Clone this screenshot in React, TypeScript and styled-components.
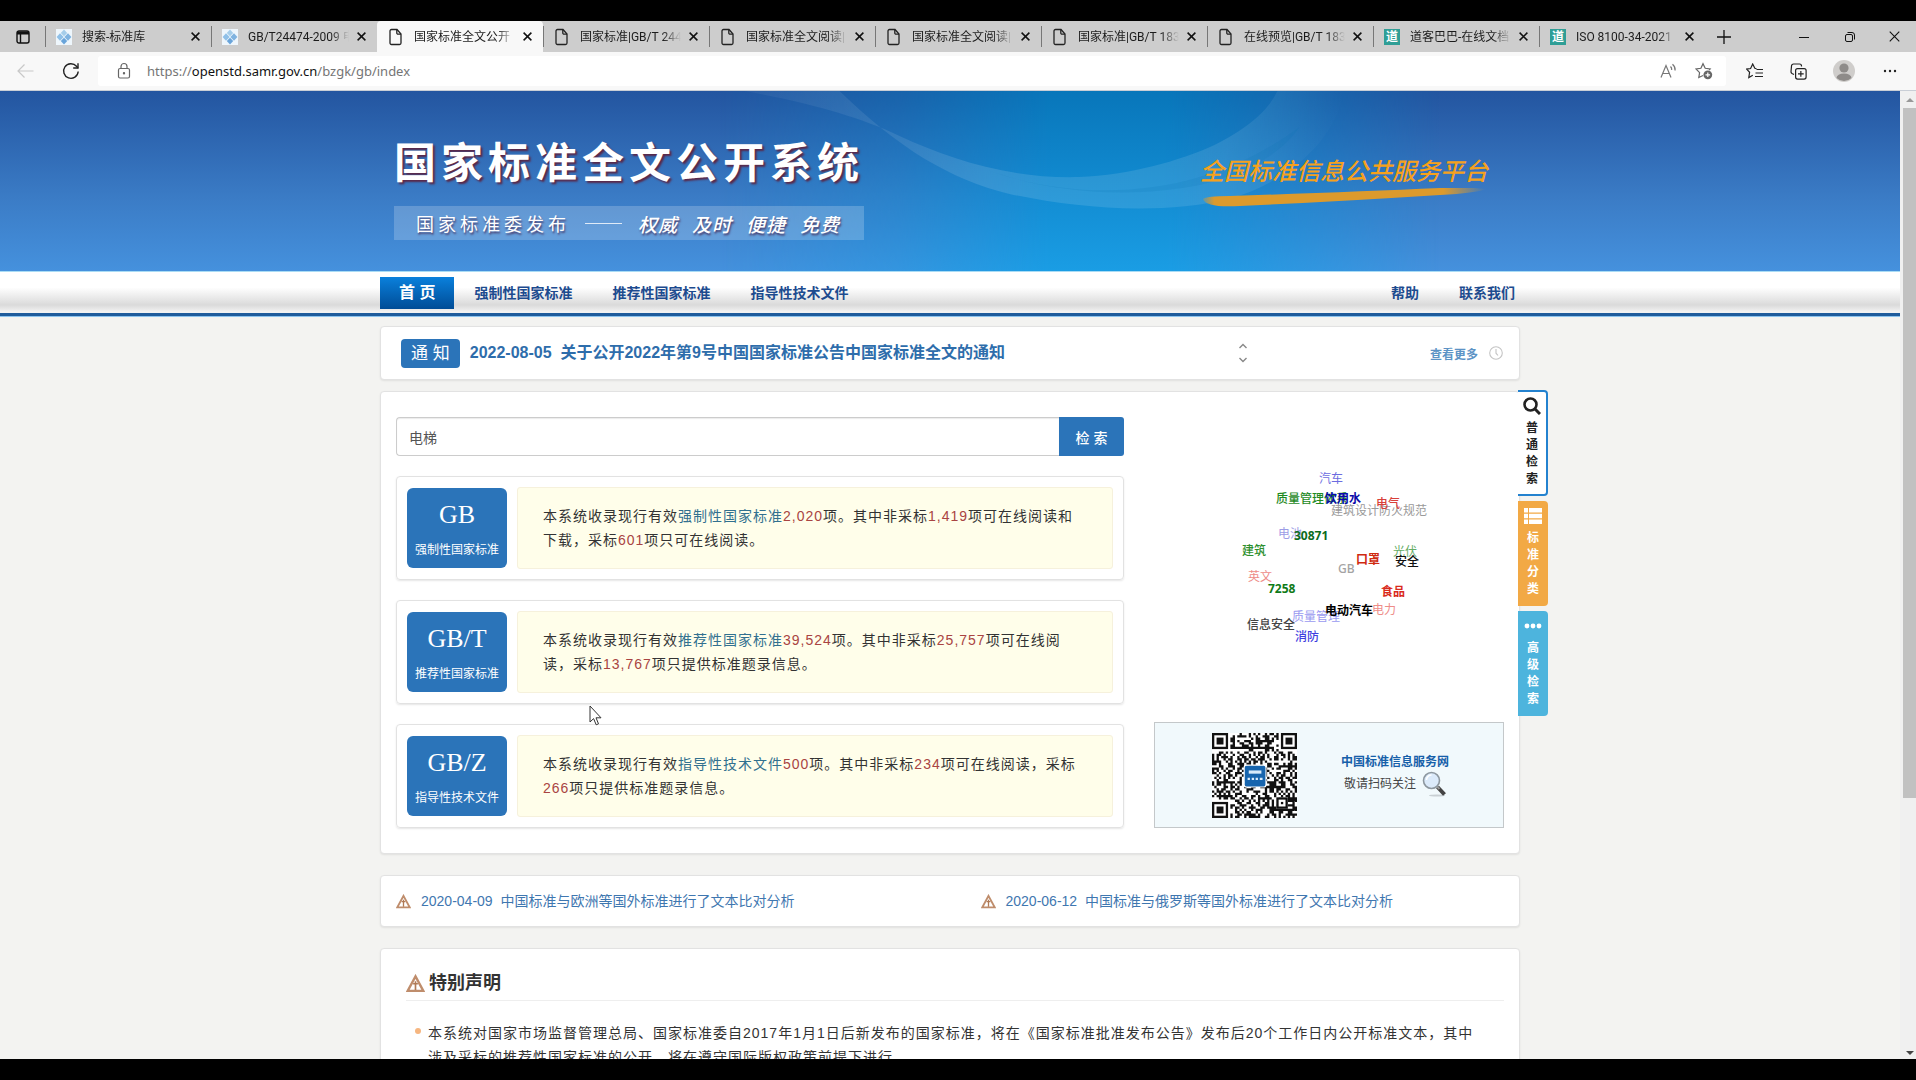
import React from "react";
import styled, { createGlobalStyle } from "styled-components";

const sans = `"Liberation Sans", "Noto Sans CJK SC", sans-serif`;
const ui = `"Noto Sans", "Noto Sans CJK SC", sans-serif`;
const tabFont = `Roboto, "Noto Sans CJK SC", sans-serif`;

const Global = createGlobalStyle`
  * { box-sizing: border-box; }
  html, body { margin: 0; background: #000; overflow: hidden; }
  body { font-family: ${sans}; font-size: 14px; color: #333; }
  button, input { font-family: inherit; margin: 0; }
  a { text-decoration: none; color: inherit; }
  svg { display: block; flex: none; }
`;

/* ---------- browser frame ---------- */

const Screen = styled.div`
  display: flex;
  flex-direction: column;
  height: 100vh;
  padding: 21px 0;
  background: #000;
`;

const TabStrip = styled.div`
  display: flex;
  align-items: stretch;
  height: 31px;
  background: #cdcdcd;
  flex: none;
  font-family: ${tabFont};
  font-size: 12px;
  color: #1c1c1c;
`;

const StripButton = styled.button<{ $w: number }>`
  display: flex;
  align-items: center;
  justify-content: center;
  width: ${(p) => p.$w}px;
  padding: 0;
  border: 0;
  background: transparent;
`;

const Tab = styled.div<{ $active?: boolean }>`
  display: flex;
  align-items: center;
  flex: 0 1 166px;
  min-width: 0;
  padding: 0 7px 0 10px;
  background: ${(p) => (p.$active ? "#f8f8f8" : "transparent")};
  border-radius: ${(p) => (p.$active ? "4px 4px 0 0" : "0")};
  border-left: 1px solid transparent;
  border-image: ${(p) =>
    p.$active ? "none" : "linear-gradient(transparent 18%, #777 18%, #777 82%, transparent 82%) 1"};
`;

const TabTitle = styled.span`
  flex: 1;
  min-width: 0;
  margin-left: 10px;
  line-height: 18px;
  white-space: nowrap;
  overflow: hidden;
  mask-image: linear-gradient(90deg, #000 82%, transparent);
`;

const TabClose = styled.button`
  display: flex;
  align-items: center;
  justify-content: center;
  width: 18px;
  height: 18px;
  margin-left: 3px;
  padding: 0;
  border: 0;
  background: transparent;
`;

const WindowControls = styled.div`
  display: flex;
  margin-left: auto;
`;

const Toolbar = styled.div`
  display: flex;
  align-items: center;
  height: 39px;
  padding: 0 3px;
  background: #f8f8f8;
  border-bottom: 1px solid #c9ced6;
  flex: none;
`;

const AddressBar = styled.div`
  display: flex;
  align-items: center;
  flex: 1;
  height: 30px;
  margin: 0 6px 0 5px;
  padding: 0 4px 0 17px;
  background: #fff;
  border-radius: 3px;
  font-family: ${ui};
  font-size: 13px;
`;

const Url = styled.a`
  flex: 1;
  margin-left: 14px;
  color: #757575;
  line-height: 20px;
  b { font-weight: 400; color: #111; }
`;

const TeaTile = styled.span`
  display: flex;
  align-items: center;
  justify-content: center;
  width: 16px;
  height: 16px;
  background: #2f9e96;
  color: #fff;
  font-size: 12px;
  line-height: 16px;
  font-weight: 700;
`;

/* ---------- page ---------- */

const Viewport = styled.div`
  display: flex;
  flex: 1;
  min-height: 0;
`;

const Page = styled.div`
  position: relative;
  flex: 1;
  min-width: 0;
  overflow: hidden;
  background: #f3f3f1;
`;

const ScrollTrack = styled.div`
  display: flex;
  flex-direction: column;
  align-items: center;
  width: 16px;
  padding: 6px 0 3px 3px;
  background: #f0f0f0;
`;

const ScrollThumb = styled.div`
  flex: 0 0 72%;
  width: 100%;
  margin: 5px 0 auto;
  background: #c1c1c1;
`;

const Container = styled.div`
  width: 100%;
  max-width: 1140px;
  margin: 0 auto;
`;

const Banner = styled.header`
  position: relative;
  height: 180px;
  background: linear-gradient(#2355a0, #3b7cc6 60%, #4591dd);
  overflow: hidden;
`;

const BannerArt = styled.svg`
  position: absolute;
  left: 50%;
  top: 0;
  width: 1901px;
  height: 180px;
  transform: translateX(-50%);
`;

const BannerRow = styled(Container)`
  position: relative;
  display: flex;
  justify-content: space-between;
  padding: 45px 32px 0 14px;
`;

const BannerTitle = styled.h1`
  margin: 0;
  font-size: 42px;
  line-height: 56px;
  letter-spacing: 5px;
  font-weight: 700;
  color: #fff;
  text-shadow: 2px 2px 2px #5a2848;
`;

const Slogan = styled.p`
  display: flex;
  align-items: center;
  height: 34px;
  margin: 14px 0 0;
  padding: 0 22px;
  background: rgba(255, 255, 255, 0.2);
  color: #fff;
  text-shadow: 1px 2px 2px #4a4070;
  font-size: 18px;
  letter-spacing: 4px;
`;

const SloganDash = styled.i`
  width: 37px;
  height: 1px;
  margin: 0 16px 0 15px;
  background: #dfeaf7;
`;

const SloganWords = styled.em`
  display: flex;
  gap: 14px;
  font-size: 19px;
  letter-spacing: 1px;
  font-weight: 500;
`;

const Platform = styled.div`
  padding-top: 20px;
  color: #f6a11c;
  font-size: 24px;
  line-height: 32px;
  font-style: italic;
  font-weight: 500;
`;

const NavBar = styled.nav`
  height: 46px;
  border-top: 1px solid #a9dcf5;
  border-bottom: 1px solid #8cc3ee;
  box-shadow: inset 0 -3px 0 #1f5c9c;
  background: linear-gradient(#fff 35%, #dadada 75%, #f2f2f2 90%);
`;

const NavList = styled(Container)`
  display: flex;
  align-items: center;
  padding: 5px 0 0;
`;

const NavLink = styled.a<{ $current?: boolean }>`
  padding: 0 ${(p) => (p.$current ? 19 : 20)}px;
  line-height: 32px;
  font-size: ${(p) => (p.$current ? 16 : 14)}px;
  font-weight: 700;
  color: ${(p) => (p.$current ? "#fff" : "#1d4b8f")};
  background: ${(p) => (p.$current ? "linear-gradient(#0a80dc, #004c96)" : "none")};
`;

const NavEnd = styled.div`
  display: flex;
  margin: 0 -15px 0 auto;
`;

const Card = styled.section`
  background: #fff;
  border: 1px solid #e2e2e2;
  border-radius: 4px;
  box-shadow: 0 1px 2px rgba(0, 0, 0, 0.08);
`;

const Body = styled(Container).attrs({ as: "main" })`
  position: relative;
  padding-top: 9px;
`;

const Notice = styled(Card)`
  display: flex;
  align-items: center;
  height: 54px;
  padding: 0 16px 0 20px;
`;

const NoticeBadge = styled.span`
  padding: 0 10px;
  margin-right: 10px;
  border-radius: 4px;
  background: #2b74b9;
  color: #fff;
  font-size: 17px;
  line-height: 29px;
`;

const NoticeLink = styled.a`
  color: #2e6dab;
  font-size: 16px;
  font-weight: 700;
  line-height: 24px;
  white-space: pre;
`;

const Stepper = styled.div`
  display: flex;
  flex-direction: column;
  margin: 0 179px 0 auto;
  button {
    padding: 4px;
    border: 0;
    background: transparent;
  }
`;

const MoreLink = styled.a`
  display: flex;
  align-items: center;
  gap: 11px;
  color: #5c93c5;
  font-size: 12px;
  font-weight: 700;
`;

const MainCard = styled(Card)`
  position: relative;
  display: flex;
  gap: 30px;
  margin-top: 11px;
  padding: 25px 15px;
`;

const Left = styled.div`
  display: flex;
  flex-direction: column;
  gap: 20px;
  flex: 1;
  min-width: 0;
`;

const SearchForm = styled.form`
  display: flex;
  height: 39px;
`;

const SearchInput = styled.input`
  flex: 1;
  min-width: 0;
  padding: 0 12px;
  border: 1px solid #ccc;
  border-right: 0;
  border-radius: 4px 0 0 4px;
  font-size: 14px;
  color: #555;
  box-shadow: inset 0 1px 1px rgba(0, 0, 0, 0.08);
`;

const SearchButton = styled.button`
  width: 65px;
  border: 0;
  border-radius: 0 3px 3px 0;
  background: #2b74b9;
  color: #fff;
  font-size: 14px;
  font-weight: 500;
`;

const Kind = styled.article`
  display: flex;
  align-items: center;
  gap: 10px;
  padding: 10px;
  border: 1px solid #e2e2e2;
  border-radius: 4px;
  box-shadow: 0 1px 2px rgba(0, 0, 0, 0.1);
`;

const KindBadge = styled.a`
  display: flex;
  flex-direction: column;
  align-items: center;
  width: 100px;
  height: 80px;
  padding-top: 10px;
  border-radius: 6px;
  background: #2b74b9;
  color: #fff;
  font-size: 12px;
  line-height: 18px;
  strong {
    margin-bottom: 9px;
    font-family: "Liberation Serif", serif;
    font-weight: 400;
    font-size: 26px;
    line-height: 34px;
  }
`;

const KindText = styled.p`
  flex: 1;
  margin: 0;
  padding: 16px 25px;
  border: 1px solid #f6f1dc;
  border-radius: 3px;
  background: #fffeea;
  line-height: 24px;
  letter-spacing: 1px;
  color: #333;
  a { color: #31708f; }
  span { color: #a94442; }
`;

const Right = styled.aside`
  display: flex;
  flex-direction: column;
  justify-content: space-between;
  width: 350px;
`;

const Cloud = styled.div`
  position: relative;
  height: 280px;
  font-family: ${ui};
  font-size: 12px;
  line-height: 18px;
`;

const Tag = styled.a<{ $x: number; $y: number; $c: string; $w?: number }>`
  position: absolute;
  left: ${(p) => p.$x}px;
  top: ${(p) => p.$y}px;
  color: ${(p) => p.$c};
  font-weight: ${(p) => p.$w ?? 400};
  white-space: nowrap;
`;

const QrBox = styled.div`
  display: flex;
  align-items: center;
  gap: 44px;
  height: 106px;
  padding: 0 54px 0 57px;
  border: 1px solid #c4c8ca;
  background: #f1f9fc;
`;

const QrText = styled.div`
  font-size: 12px;
  line-height: 18px;
  color: #444;
  b { display: block; color: #1660a9; }
  span {
    display: flex;
    align-items: center;
    gap: 5px;
    padding-left: 3px;
  }
`;

const SideTabs = styled.div`
  position: absolute;
  left: 100%;
  top: -2px;
  display: flex;
  flex-direction: column;
  gap: 5px;
  margin-left: -1px;
`;

const SideTab = styled.button<{ $bg: string; $outlined?: boolean }>`
  display: flex;
  flex-direction: column;
  align-items: center;
  gap: 5px;
  width: 30px;
  height: ${(p) => (p.$outlined ? 106 : 105)}px;
  padding: ${(p) => (p.$outlined ? 5 : 6)}px 0 0;
  border: ${(p) => (p.$outlined ? "2px solid #2382cf" : "0")};
  border-left: 0;
  border-radius: 0 4px 4px 0;
  background: ${(p) => p.$bg};
  color: ${(p) => (p.$outlined ? "#222" : "#fff")};
  font-size: 12px;
  line-height: 17px;
  font-weight: 700;
  span { width: 12px; }
`;

const Compare = styled(Card)`
  display: grid;
  grid-template-columns: 1fr 1fr;
  margin-top: 21px;
  padding: 0 0 0 15px;
  a {
    display: flex;
    align-items: center;
    gap: 10px;
    color: #3f77b0;
    line-height: 50px;
    white-space: pre;
  }
  a + a { padding-left: 23px; }
`;

const Statement = styled(Card)`
  margin-top: 21px;
  padding: 21px 15px 20px 25px;
`;

const StatementTitle = styled.h2`
  display: flex;
  align-items: center;
  gap: 4px;
  margin: 0 0 20px;
  padding-bottom: 3px;
  border-bottom: 1px solid #eee;
  font-size: 18px;
  line-height: 27px;
  color: #333;
`;

const StatementList = styled.ul`
  margin: 0;
  padding: 0 28px 0 0;
  list-style: none;
  li {
    display: flex;
    gap: 7px;
    padding-left: 9px;
    line-height: 24px;
    letter-spacing: 1px;
  }
  li::before {
    content: "";
    flex: none;
    width: 6px;
    height: 6px;
    margin-top: 7px;
    border-radius: 50%;
    background: #f6b680;
  }
`;

const Pointer = styled.svg`
  position: absolute;
  left: 589px;
  top: 614px;
`;

/* ---------- drawings ---------- */

const Diamonds = () => (
  <svg width="16" height="16" viewBox="0 0 16 16">
    <rect width="16" height="16" fill="#eef6fc" />
    <path d="M8 0.500l3.200 3.400L8 7.300 4.800 3.900z" fill="#a5cdea" />
    <path d="M4 4.300l3.600 3.700-3.600 3.700L.6 8z" fill="#8fc0e8" />
    <path d="M12 4.300L15.400 8 12 11.700 8.400 8z" fill="#7fb3e0" />
    <path d="M8 8.700l3.200 3.400L8 15.500l-3.200-3.400z" fill="#69a4da" />
  </svg>
);

const Doc = () => (
  <svg width="16" height="18" viewBox="0 0 16 18" fill="none" stroke="#222" strokeWidth="1.3">
    <path d="M3.500 1.500h5.500l4 4.500v9a1.500 1.500 0 0 1-1.500 1.500h-8A1.500 1.500 0 0 1 2 15V3a1.500 1.500 0 0 1 1.500-1.500z" />
    <path d="M8.800 1.700V5a1.200 1.200 0 0 0 1.200 1.200h3" />
  </svg>
);

const Tea = () => <TeaTile aria-hidden="true">道</TeaTile>;

const Cross = ({ s = 9, w = 1.5 }: { s?: number; w?: number }) => (
  <svg width={s} height={s} viewBox="0 0 9 9" stroke="#111" strokeWidth={w}>
    <path d="M.6.6l7.800 7.800M8.400.6L.6 8.400" />
  </svg>
);

const Warn = ({ s }: { s: number }) => (
  <svg width={s} height={s} viewBox="0 0 16 16">
    <path d="M8 2L14.600 14.200H1.400z" fill="none" stroke="#bf8d6c" strokeWidth="2" />
    <path d="M8 6v7.500M6 8.200h4" stroke="#b07a56" strokeWidth="1.400" />
  </svg>
);

const QR_SIZE = 37;
const qrPath = (() => {
  let seed = 20220805;
  const next = () => {
    seed = (seed * 1103515245 + 12345) & 0x7fffffff;
    return (seed >> 12) & 1;
  };
  const inFinder = (x: number, y: number) =>
    (x < 8 && y < 8) || (x > QR_SIZE - 9 && y < 8) || (x < 8 && y > QR_SIZE - 9);
  let d = "";
  for (let y = 0; y < QR_SIZE; y++)
    for (let x = 0; x < QR_SIZE; x++) if (next() && !inFinder(x, y)) d += `M${x} ${y}h1v1h-1z`;
  return d;
})();

const Finder = ({ x, y }: { x: number; y: number }) => (
  <g>
    <rect x={x + 0.5} y={y + 0.5} width="6" height="6" fill="#fff" stroke="#111" />
    <rect x={x + 2} y={y + 2} width="3" height="3" fill="#111" />
  </g>
);

const Qr = () => (
  <svg width="85" height="85" viewBox={`0 0 ${QR_SIZE} ${QR_SIZE}`} role="img" aria-label="QR">
    <rect width={QR_SIZE} height={QR_SIZE} fill="#fff" />
    <path d={qrPath} fill="#111" />
    <Finder x={0} y={0} />
    <Finder x={30} y={0} />
    <Finder x={0} y={30} />
    <rect x="28" y="28" width="5" height="5" fill="#fff" />
    <rect x="28.500" y="28.500" width="4" height="4" fill="none" stroke="#111" />
    <rect x="30" y="30" width="1" height="1" fill="#111" />
    <rect x="14" y="14" width="9.500" height="9.500" rx="1" fill="#1765ae" stroke="#fff" strokeWidth=".5" />
    <path d="M16 17h5.500" stroke="#d8ebfb" strokeWidth="1.400" />
    <path d="M15.500 20h1M17.300 20h1M19 20h1M20.800 20h1.200" stroke="#d8ebfb" strokeWidth="1" />
  </svg>
);

const Glass = () => (
  <svg width="26" height="26" viewBox="0 0 26 26">
    <ellipse cx="16" cy="24.500" rx="8" ry="1" fill="#c9d0d4" />
    <path d="M16.500 16l7 7.500" stroke="#444" strokeWidth="4" />
    <path d="M15.500 15l3 3" stroke="#999" strokeWidth="2" />
    <circle cx="10.500" cy="9.500" r="8" fill="#dbeafa" stroke="#8d979f" strokeWidth="1.600" />
    <path d="M5.500 9a5 5 0 0 1 5-5" stroke="#fff" strokeWidth="1.500" fill="none" />
  </svg>
);

/* ---------- data ---------- */

const tabs: [React.FC, string, boolean?][] = [
  [Diamonds, "搜索-标准库"],
  [Diamonds, "GB/T24474-2009 电"],
  [Doc, "国家标准全文公开", true],
  [Doc, "国家标准|GB/T 244"],
  [Doc, "国家标准全文阅读|"],
  [Doc, "国家标准全文阅读|"],
  [Doc, "国家标准|GB/T 183"],
  [Doc, "在线预览|GB/T 183"],
  [Tea, "道客巴巴-在线文档"],
  [Tea, "ISO 8100-34-2021"],
];

const tags: [string, number, number, string, number?][] = [
  ["汽车", 165, 53, "#6c6ce0"],
  ["质量管理体系", 122, 73, "#1f8a1f", 500],
  ["建筑设计防火规范", 177, 85, "#9a9a9a"],
  ["饮用水", 171, 73, "#0a0aa8", 700],
  ["电气", 222, 78, "#d8403a", 500],
  ["电池", 124, 108, "#9c9ce6"],
  ["30871", 140, 110, "#0b6b1c", 700],
  ["建筑", 88, 125, "#2e8f2e", 500],
  ["口罩", 202, 134, "#cf2a10", 700],
  ["GB", 184, 143, "#a3a3a3", 500],
  ["光伏", 239, 126, "#66ad66"],
  ["安全", 241, 136, "#111", 500],
  ["英文", 94, 151, "#ee8c88"],
  ["7258", 114, 163, "#0f7a18", 700],
  ["食品", 227, 166, "#d92a1c", 700],
  ["质量管理", 138, 191, "#9a9af0"],
  ["电动汽车", 171, 185, "#000", 700],
  ["电力", 218, 184, "#ee8c88"],
  ["信息安全", 93, 199, "#444", 500],
  ["消防", 141, 211, "#3f3fe0", 500],
];

export default function App() {
  return (
    <>
      <Global />
      <Screen>
        <TabStrip>
          <StripButton $w={45} aria-label="Tab actions">
            <svg width="14" height="14" viewBox="0 0 14 14" fill="none" stroke="#111" strokeWidth="1.400">
              <rect x="1" y="1" width="12" height="12" rx="2" />
              <path d="M1 3h12" strokeWidth="3" />
              <path d="M4.500 4v9" />
            </svg>
          </StripButton>
          {tabs.map(([Icon, title, active], i) => (
            <Tab key={i} $active={active}>
              <Icon />
              <TabTitle>{title}</TabTitle>
              <TabClose aria-label="Close tab">
                <Cross />
              </TabClose>
            </Tab>
          ))}
          <StripButton $w={38} aria-label="New tab">
            <svg width="14" height="14" stroke="#111" strokeWidth="1.300">
              <path d="M7 0v14M0 7h14" />
            </svg>
          </StripButton>
          <WindowControls>
            <StripButton $w={46} aria-label="Minimize">
              <svg width="10" height="10" stroke="#111">
                <path d="M0 5.500h10" />
              </svg>
            </StripButton>
            <StripButton $w={46} aria-label="Restore">
              <svg width="10" height="10" fill="none" stroke="#111">
                <rect x=".5" y="2.500" width="7" height="7" rx="1.500" />
                <path d="M2.500.5H7A2.500 2.500 0 0 1 9.500 3v4.500" />
              </svg>
            </StripButton>
            <StripButton $w={43} aria-label="Close">
              <Cross s={11} w={0.9} />
            </StripButton>
          </WindowControls>
        </TabStrip>

        <Toolbar>
          <StripButton $w={45} aria-label="Back" disabled>
            <svg width="17" height="14" viewBox="0 0 17 14" fill="none" stroke="#c8c8c8" strokeWidth="1.200">
              <path d="M16.500 7H1M7.500.5L1 7l6.500 6.500" />
            </svg>
          </StripButton>
          <StripButton $w={45} aria-label="Reload">
            <svg width="18" height="18" viewBox="0 0 18 18" fill="none" stroke="#222" strokeWidth="1.400">
              <path d="M16.200 9.500A7.300 7.300 0 1 1 14.500 4.300L16 6" />
              <path d="M16 1.200V6h-4.800" />
            </svg>
          </StripButton>
          <AddressBar>
            <svg width="18" height="18" viewBox="0 0 18 18" fill="none" stroke="#666" strokeWidth="1.200">
              <rect x="3.500" y="6.500" width="11" height="9.500" rx="1.500" />
              <path d="M6 6.500V4.500a3 3 0 0 1 6 0v2" />
              <circle cx="9" cy="11.200" r=".6" fill="#666" />
            </svg>
            <Url href="#">
              https://<b>openstd.samr.gov.cn</b>/bzgk/gb/index
            </Url>
            <StripButton $w={36} aria-label="Read aloud">
              <svg width="17" height="16" viewBox="0 0 17 16" fill="none" stroke="#777" strokeWidth="1.200">
                <path d="M1 14.500L6 2.500l5 12M2.800 10.500h6.400" />
                <path d="M10.500 3.500q1.500 1.500 1.200 3.500M12.500 1.200q3 2.500 2.600 6.300" />
              </svg>
            </StripButton>
            <StripButton $w={36} aria-label="Add to favorites">
              <svg width="18" height="18" viewBox="0 0 18 18" fill="none" stroke="#666" strokeWidth="1.200">
                <path d="M8 15l-4.200 2 .8-4.900L1 8.500l4.900-.7L8 3.200l2.200 4.600 4.900.7-1 1" transform="translate(0 -1.500)" />
                <circle cx="12.800" cy="12.800" r="4.400" fill="#666" stroke="none" />
                <path d="M12.800 10.500v4.600M10.500 12.800h4.600" stroke="#fff" />
              </svg>
            </StripButton>
          </AddressBar>
          <StripButton $w={44} aria-label="Favorites">
            <svg width="17" height="17" viewBox="0 0 17 17" fill="none" stroke="#222" strokeWidth="1.200">
              <path d="M10.500 5.600L8.800 5.300 6.700 1 4.600 5.500l-4 .6 3 3.200-.8 5.200 4-2.300" />
              <path d="M10.500 6.500H17M9.500 10H17M9 13.500h8" />
            </svg>
          </StripButton>
          <StripButton $w={45} aria-label="Collections">
            <svg width="17" height="17" viewBox="0 0 17 17" fill="none" stroke="#222" strokeWidth="1.200">
              <rect x="5.600" y="5.600" width="10.500" height="10.500" rx="2" />
              <path d="M10.850 8v5.700M8 10.850h5.700" />
              <path d="M4 11.500L2 10.500a2 2 0 0 1-1-2L1.500 3A2 2 0 0 1 3.500 1h6a2 2 0 0 1 2 2v.5" />
            </svg>
          </StripButton>
          <StripButton $w={46} aria-label="Profile">
            <svg width="22" height="22" viewBox="0 0 22 22">
              <circle cx="11" cy="11" r="11" fill="#cfcdcb" />
              <circle cx="11" cy="8" r="4.600" fill="#8e8b89" />
              <path d="M3.500 18a7.500 4.500 0 0 1 15 0 11 11 0 0 1-15 0z" fill="#8e8b89" />
            </svg>
          </StripButton>
          <StripButton $w={46} aria-label="Menu">
            <svg width="14" height="4" fill="#222">
              <circle cx="2" cy="2" r="1.200" />
              <circle cx="7" cy="2" r="1.200" />
              <circle cx="12" cy="2" r="1.200" />
            </svg>
          </StripButton>
        </Toolbar>

        <Viewport>
          <Page>
            <Banner>
              <BannerArt viewBox="0 0 1901 180" aria-hidden="true">
                <defs>
                  <linearGradient id="glow" x1="0" x2="0" y1="0" y2="1">
                    <stop offset="0" stopColor="#0876ba" />
                    <stop offset="1" stopColor="#1a9de4" />
                  </linearGradient>
                  <linearGradient id="fade" x1="0" x2="1" y1="0" y2="0">
                    <stop offset="0" stopColor="#fff" stopOpacity="0" />
                    <stop offset=".25" stopColor="#fff" stopOpacity=".4" />
                    <stop offset=".46" stopColor="#fff" />
                    <stop offset=".62" stopColor="#fff" />
                    <stop offset="1" stopColor="#fff" stopOpacity="0" />
                  </linearGradient>
                  <mask id="glowMask">
                    <rect x="720" width="720" height="180" fill="url(#fade)" />
                  </mask>
                  <linearGradient id="swoosh" x1="0" x2="1" y1="0" y2="0">
                    <stop offset="0" stopColor="#fff" stopOpacity=".04" />
                    <stop offset=".4" stopColor="#fff" stopOpacity=".12" />
                    <stop offset=".8" stopColor="#fff" stopOpacity=".1" />
                    <stop offset="1" stopColor="#fff" stopOpacity="0" />
                  </linearGradient>
                </defs>
                <rect x="720" width="720" height="180" fill="url(#glow)" mask="url(#glowMask)" />
                <path d="M745 0C810 12 860 26 900 45C950 68 1010 88 1080 86C1130 84 1180 70 1215 54C1250 36 1268 20 1278 0H1345C1335 50 1290 90 1230 108C1160 124 1080 118 1010 103C950 88 900 58 840 0Z" fill="url(#swoosh)" />
                <path d="M985 78C1060 106 1140 104 1200 86C1240 74 1270 58 1300 36C1280 66 1240 84 1200 94C1130 108 1050 102 985 78Z" fill="#0a6fb4" opacity=".14" />
              </BannerArt>
              <BannerRow>
                <div>
                  <BannerTitle>国家标准全文公开系统</BannerTitle>
                  <Slogan>
                    国家标准委发布
                    <SloganDash />
                    <SloganWords>
                      <span>权威</span>
                      <span>及时</span>
                      <span>便捷</span>
                      <span>免费</span>
                    </SloganWords>
                  </Slogan>
                </div>
                <Platform>
                  全国标准信息公共服务平台
                  <svg width="286" height="22" viewBox="0 0 286 22">
                    <defs>
                      <linearGradient id="brush" x1="0" x2="1" y1="0" y2="0">
                        <stop offset="0" stopColor="#dc9a2c" stopOpacity=".3" />
                        <stop offset=".04" stopColor="#dc9a2c" />
                        <stop offset=".85" stopColor="#dc9a2c" />
                        <stop offset="1" stopColor="#dc9a2c" stopOpacity="0" />
                      </linearGradient>
                    </defs>
                    <path d="M3 11Q6 8 30 8Q150 4 240 0Q270-1 286 1Q276 5 240 7Q130 14 40 18Q6 20 3 11Z" fill="url(#brush)" />
                  </svg>
                </Platform>
              </BannerRow>
            </Banner>

            <NavBar>
              <NavList>
                <NavLink href="#" $current>首 页</NavLink>
                <NavLink href="#">强制性国家标准</NavLink>
                <NavLink href="#">推荐性国家标准</NavLink>
                <NavLink href="#">指导性技术文件</NavLink>
                <NavEnd>
                  <NavLink href="#">帮助</NavLink>
                  <NavLink href="#">联系我们</NavLink>
                </NavEnd>
              </NavList>
            </NavBar>

            <Body>
              <Notice>
                <NoticeBadge>通 知</NoticeBadge>
                <NoticeLink href="#">{"2022-08-05  关于公开2022年第9号中国国家标准公告中国家标准全文的通知"}</NoticeLink>
                <Stepper>
                  <button aria-label="Previous">
                    <svg width="8" height="6" fill="none" stroke="#888" strokeWidth="1.400"><path d="M.5 5L4 1.500 7.500 5" /></svg>
                  </button>
                  <button aria-label="Next">
                    <svg width="8" height="6" fill="none" stroke="#888" strokeWidth="1.400"><path d="M.5 1L4 4.500 7.500 1" /></svg>
                  </button>
                </Stepper>
                <MoreLink href="#">
                  查看更多
                  <svg width="14" height="14" viewBox="0 0 14 14" fill="none" stroke="#c4c4c4" strokeWidth="1.100">
                    <circle cx="7" cy="7" r="6.300" />
                    <path d="M7 3v4.200l2 2.300" />
                  </svg>
                </MoreLink>
              </Notice>

              <MainCard>
                <Left>
                  <SearchForm onSubmit={(e) => e.preventDefault()}>
                    <SearchInput aria-label="检索" defaultValue="电梯" />
                    <SearchButton>检 索</SearchButton>
                  </SearchForm>
                  <Kind>
                    <KindBadge href="#"><strong>GB</strong>强制性国家标准</KindBadge>
                    <KindText>
                      本系统收录现行有效<a href="#">强制性国家标准</a><span>2,020</span>项。其中非采标<span>1,419</span>项可在线阅读和下载，采标<span>601</span>项只可在线阅读。
                    </KindText>
                  </Kind>
                  <Kind>
                    <KindBadge href="#"><strong>GB/T</strong>推荐性国家标准</KindBadge>
                    <KindText>
                      本系统收录现行有效<a href="#">推荐性国家标准</a><span>39,524</span>项。其中非采标<span>25,757</span>项可在线阅读，采标<span>13,767</span>项只提供标准题录信息。
                    </KindText>
                  </Kind>
                  <Kind>
                    <KindBadge href="#"><strong>GB/Z</strong>指导性技术文件</KindBadge>
                    <KindText>
                      本系统收录现行有效<a href="#">指导性技术文件</a><span>500</span>项。其中非采标<span>234</span>项可在线阅读，采标<span>266</span>项只提供标准题录信息。
                    </KindText>
                  </Kind>
                </Left>
                <Right>
                  <Cloud>
                    {tags.map(([text, x, y, c, w]) => (
                      <Tag key={text} href="#" $x={x} $y={y} $c={c} $w={w}>{text}</Tag>
                    ))}
                  </Cloud>
                  <QrBox>
                    <Qr />
                    <QrText>
                      <b>中国标准信息服务网</b>
                      <span>敬请扫码关注<Glass /></span>
                    </QrText>
                  </QrBox>
                </Right>
                <SideTabs>
                  <SideTab $bg="#fff" $outlined>
                    <svg width="18" height="18" viewBox="0 0 18 18" fill="none" stroke="#222">
                      <circle cx="7.500" cy="7.500" r="6" strokeWidth="2.600" />
                      <path d="M12 12l5 5" strokeWidth="3" />
                    </svg>
                    <span>普通检索</span>
                  </SideTab>
                  <SideTab $bg="#f2a945">
                    <svg width="18" height="18" viewBox="0 0 18 18" fill="#fff">
                      <path d="M0 1h4v4.500H0zM5 1h13v4.500H5zM0 6.800h4v4.500H0zM5 6.800h13v4.500H5zM0 12.600h4V17H0zM5 12.600h13V17H5z" />
                    </svg>
                    <span>标准分类</span>
                  </SideTab>
                  <SideTab $bg="#4db4dd">
                    <svg width="18" height="18" fill="#fff">
                      <circle cx="3" cy="9" r="2.400" />
                      <circle cx="9" cy="9" r="2.400" />
                      <circle cx="15" cy="9" r="2.400" />
                    </svg>
                    <span>高级检索</span>
                  </SideTab>
                </SideTabs>
              </MainCard>

              <Compare>
                <a href="#"><Warn s={15} />{"2020-04-09  中国标准与欧洲等国外标准进行了文本比对分析"}</a>
                <a href="#"><Warn s={15} />{"2020-06-12  中国标准与俄罗斯等国外标准进行了文本比对分析"}</a>
              </Compare>

              <Statement>
                <StatementTitle><Warn s={19} />特别声明</StatementTitle>
                <StatementList>
                  <li>
                    本系统对国家市场监督管理总局、国家标准委自2017年1月1日后新发布的国家标准，将在《国家标准批准发布公告》发布后20个工作日内公开标准文本，其中涉及采标的推荐性国家标准的公开，将在遵守国际版权政策前提下进行。
                  </li>
                </StatementList>
              </Statement>
            </Body>
            <Pointer width="13" height="21" viewBox="0 0 13 21" aria-hidden="true">
              <path d="M1 1v16l3.600-3.400L7.200 19.800l2.300-1L7 12.800h5z" fill="#fff" stroke="#333" />
            </Pointer>
          </Page>
          <ScrollTrack>
            <svg width="8" height="6" fill="#999"><path d="M0 5l4-4 4 4z" /></svg>
            <ScrollThumb />
            <svg width="8" height="6" fill="#444"><path d="M0 1h8L4 5z" /></svg>
          </ScrollTrack>
        </Viewport>
      </Screen>
    </>
  );
}
